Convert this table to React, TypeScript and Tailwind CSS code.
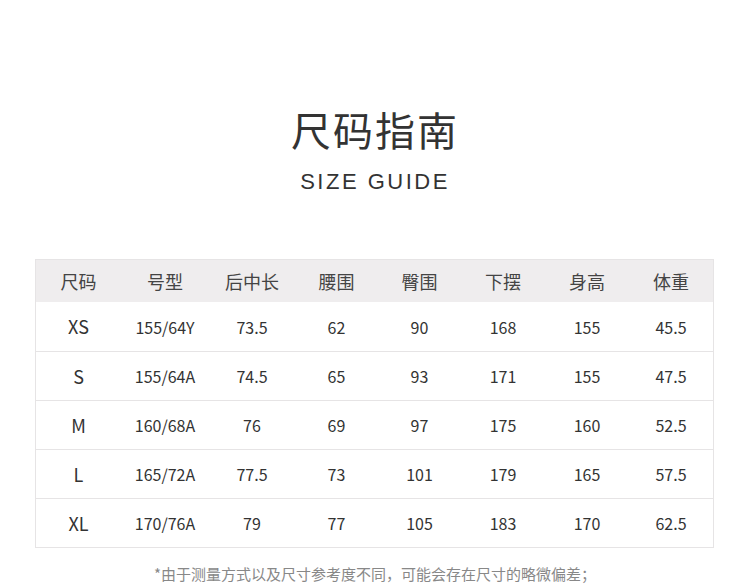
const headers = ["尺码", "号型", "后中长", "腰围", "臀围", "下摆", "身高", "体重"];

const rows = [
  ["XS", "155/64Y", "73.5", "62", "90", "168", "155", "45.5"],
  ["S", "155/64A", "74.5", "65", "93", "171", "155", "47.5"],
  ["M", "160/68A", "76", "69", "97", "175", "160", "52.5"],
  ["L", "165/72A", "77.5", "73", "101", "179", "165", "57.5"],
  ["XL", "170/76A", "79", "77", "105", "183", "170", "62.5"],
];

// 列宽按参考图实测
const cols = "grid grid-cols-[85px_88px_86px_83px_83px_84px_84px_84px]";

export default function App() {
  return (
    <div className="w-[750px] h-[585px] bg-white overflow-hidden font-['Noto_Sans_CJK_SC',sans-serif] text-[#333]">
      <div className="pt-[103px] flex flex-col items-center">
        <h1 className="text-[40px] leading-[52px] tracking-[2px] text-[#333]">尺码指南</h1>
        <p className="mt-[13px] text-[22px] leading-[28px] tracking-[2.5px] text-[#333] font-['Liberation_Sans',sans-serif]">
          SIZE GUIDE
        </p>
      </div>

      <div className="mt-[63px] ml-[35px] w-[679px] border border-[#e6e4e5]">
        <div className={cols + " h-[42px] bg-[#efedee] items-center text-[18px] text-[#444]"}>
          {headers.map((h) => (
            <div key={h} className="text-center">
              {h}
            </div>
          ))}
        </div>
        {rows.map((r, i) => (
          <div
            key={r[0]}
            className={
              cols +
              " h-[49px] items-center text-[16px] text-[#333] " +
              (i > 0 ? "border-t border-[#e6e4e5]" : "")
            }
          >
            {r.map((c, j) => (
              <div key={j} className={j === 0 ? "text-center text-[18px]" : "text-center"}>
                {c}
              </div>
            ))}
          </div>
        ))}
      </div>

      <p className="mt-[16px] text-center text-[15px] leading-[20px] text-[#888]">
        *由于测量方式以及尺寸参考度不同，可能会存在尺寸的略微偏差；
      </p>
    </div>
  );
}
